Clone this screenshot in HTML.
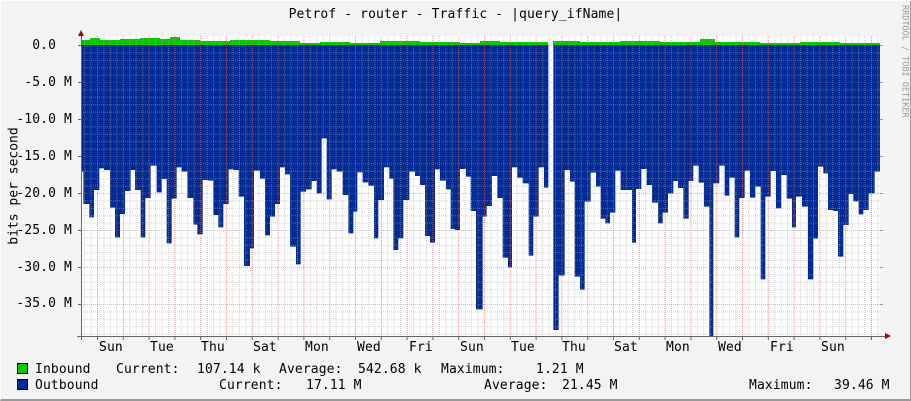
<!DOCTYPE html>
<html><head><meta charset="utf-8"><style>
html,body{margin:0;padding:0}
body{width:911px;height:400px;overflow:hidden;background:#f3f3f3;position:relative;font-family:"DejaVu Sans Mono","Liberation Mono",monospace;font-size:13px;color:#000}
.frame{position:absolute;left:0;top:0;width:909px;height:398px;border-right:2px solid #9a9a9a;border-bottom:2px solid #9a9a9a;border-top:1px solid #fff;border-left:1px solid #fff;box-sizing:content-box}
.t{position:absolute;white-space:pre;line-height:14px;letter-spacing:0.12px}
.sw{position:absolute;width:9px;height:9px;border:1px solid #000}
</style></head><body>
<div class="frame"></div>
<svg width="911" height="400" style="position:absolute;left:0;top:0">
<defs><clipPath id="c"><rect x="81" y="36" width="799" height="300"/></clipPath></defs>
<rect x="81" y="36" width="799" height="300" fill="#fff"/>
<g clip-path="url(#c)">
<path d="M81 45 V40 H90 V38 H100 V40 H120 V39 H140 V38 H160 V39 H170 V37 H180 V40 H200 V41 H230 V40 H270 V41 H300 V43 H320 V42 H350 V43 H380 V41 H420 V42 H460 V43 H480 V41 H500 V42 H548 V45 Z M553 45 V41 H580 V42 H620 V41 H660 V42 H700 V39 H715 V42 H760 V43 H800 V42 H840 V43 H880 V45 Z" fill="#00cc00"/>
<g transform="translate(80,130) scale(0.33333)" fill="#002a97">
<path d="M0 -255 V125 H10 V222 H28 V262 H42 V180 H58 V115 H72 V120 H90 V233 H105 V322 H120 V252 H135 V183 H152 V120 H165 V180 H182 V322 H196 V204 H212 V107 H230 V187 H245 V147 H260 V340 H275 V206 H290 V112 H305 V125 H322 V204 H340 V284 H352 V313 H368 V150 H385 V152 H400 V255 H415 V292 H430 V222 H446 V118 H460 V120 H476 V200 H492 V408 H510 V355 H522 V122 H540 V146 H555 V316 H570 V260 H585 V222 H600 V112 H615 V133 H630 V350 H648 V403 H662 V185 H678 V178 H695 V153 H710 V190 H725 V25 H740 V208 H755 V118 H770 V125 H788 V195 H805 V310 H820 V245 H832 V127 H848 V157 H865 V167 H882 V325 H895 V210 H912 V112 H928 V146 H940 V360 H955 V325 H970 V210 H988 V125 H1005 V138 H1020 V165 H1035 V318 H1050 V338 H1065 V118 H1080 V152 H1098 V178 H1112 V297 H1125 V300 H1140 V117 H1158 V140 H1172 V243 H1188 V538 H1208 V260 H1220 V228 H1236 V138 H1252 V204 H1268 V383 H1284 V412 H1296 V112 H1312 V143 H1328 V160 H1346 V377 H1360 V260 H1376 V112 H1392 V173 H1405 V-255 Z"/>
<path d="M1420 -255 V600 H1436 V437 H1454 V120 H1470 V155 H1484 V440 H1500 V479 H1514 V215 H1532 V128 H1548 V170 H1562 V266 H1576 V280 H1590 V248 H1606 V122 H1622 V180 H1640 V180 H1656 V338 H1668 V177 H1684 V117 H1700 V165 H1716 V218 H1734 V280 H1748 V248 H1764 V190 H1780 V153 H1794 V174 H1810 V266 H1826 V153 H1840 V107 H1856 V158 H1872 V230 H1888 V640 H1900 V160 H1918 V107 H1934 V197 H1948 V143 H1964 V322 H1978 V204 H1994 V122 H2010 V203 H2026 V170 H2042 V448 H2056 V200 H2072 V123 H2088 V235 H2104 V135 H2120 V206 H2136 V292 H2148 V200 H2166 V230 H2184 V448 H2200 V326 H2214 V110 H2230 V130 H2244 V240 H2260 V243 H2274 V380 H2290 V285 H2306 V192 H2320 V214 H2336 V253 H2350 V240 H2366 V190 H2384 V125 H2400 V-255 Z"/>
</g>
<g id="grid" stroke-width="1" stroke-dasharray="1,1" fill="none"></g>
</g>
<g id="ax" stroke="#666" fill="none"></g>
<path d="M885 333 L891 336 L885 339 Z" fill="#a00"/>
<path d="M78 36 L81 30 L84 36 Z" fill="#a00"/>
<text x="905" y="5" transform="rotate(90 905 5)" font-family="DejaVu Sans Mono, monospace" font-size="8.5" fill="#999" dominant-baseline="middle">RRDTOOL / TOBI OETIKER</text>
<text x="14" y="186" transform="rotate(-90 14 186)" text-anchor="middle" font-family="DejaVu Sans Mono, monospace" font-size="13" dominant-baseline="middle">bits per second</text>
</svg>
<script>
(function(){
var ns="http://www.w3.org/2000/svg",g=document.getElementById('grid'),ax=document.getElementById('ax');
function L(p,x1,y1,x2,y2,s){var l=document.createElementNS(ns,'line');l.setAttribute('x1',x1);l.setAttribute('y1',y1);l.setAttribute('x2',x2);l.setAttribute('y2',y2);l.setAttribute('stroke',s);p.appendChild(l);}
for(var i=0;i<54;i++){var y=45.5+i*7.4;if(y>336)break;if(i%5)L(g,81,y,880,y,'rgba(170,170,170,0.5)');}
for(var x=84.6;x<880;x+=6.45){L(g,x,36,x,336,'rgba(170,170,170,0.5)');}
for(var i=0;i<9;i++){var y=45.5+i*37;if(y>336)break;L(g,81,y,880,y,'rgba(230,60,60,0.4)');}
for(var x=97.5;x<880;x+=25.8){L(g,x,36,x,336,'rgba(230,60,60,0.4)');}
L(ax,77,336.5,886,336.5,'#666');L(ax,81.5,32,81.5,340,'#666');
for(var i=0;i<9;i++){var y=45.5+i*37;if(y>336)break;L(ax,78,y,81,y,'#666');L(ax,880,y,883,y,'#999');}
for(var x=97.5;x<880;x+=25.8){L(ax,x,336,x,340,'#666');}
})();
</script>
<div class="t" style="left:0;width:911px;text-align:center;top:8px">Petrof - router - Traffic - |query_ifName|</div>
<div class="t" style="right:839px;top:39px">0.0  </div>
<div class="t" style="right:839px;top:76px">-5.0 M</div>
<div class="t" style="right:839px;top:113px">-10.0 M</div>
<div class="t" style="right:839px;top:150px">-15.0 M</div>
<div class="t" style="right:839px;top:187px">-20.0 M</div>
<div class="t" style="right:839px;top:224px">-25.0 M</div>
<div class="t" style="right:839px;top:261px">-30.0 M</div>
<div class="t" style="right:839px;top:297px">-35.0 M</div>
<div class="t" style="left:99px;top:341px">Sun</div>
<div class="t" style="left:150px;top:341px">Tue</div>
<div class="t" style="left:201px;top:341px">Thu</div>
<div class="t" style="left:253px;top:341px">Sat</div>
<div class="t" style="left:305px;top:341px">Mon</div>
<div class="t" style="left:357px;top:341px">Wed</div>
<div class="t" style="left:409px;top:341px">Fri</div>
<div class="t" style="left:460px;top:341px">Sun</div>
<div class="t" style="left:511px;top:341px">Tue</div>
<div class="t" style="left:562px;top:341px">Thu</div>
<div class="t" style="left:614px;top:341px">Sat</div>
<div class="t" style="left:666px;top:341px">Mon</div>
<div class="t" style="left:718px;top:341px">Wed</div>
<div class="t" style="left:770px;top:341px">Fri</div>
<div class="t" style="left:821px;top:341px">Sun</div>
<div class="sw" style="left:17px;top:363px;background:#00cc00"></div>
<div class="sw" style="left:17px;top:379px;background:#002a97"></div>
<div class="t" style="left:35px;top:363px">Inbound</div>
<div class="t" style="left:116px;top:363px">Current:</div>
<div class="t" style="left:197px;top:363px">107.14 k</div>
<div class="t" style="left:279px;top:363px">Average:</div>
<div class="t" style="left:358px;top:363px">542.68 k</div>
<div class="t" style="left:441px;top:363px">Maximum:</div>
<div class="t" style="left:536px;top:363px">1.21 M</div>
<div class="t" style="left:35px;top:379px">Outbound</div>
<div class="t" style="left:219px;top:379px">Current:</div>
<div class="t" style="left:306px;top:379px">17.11 M</div>
<div class="t" style="left:484px;top:379px">Average:</div>
<div class="t" style="left:562px;top:379px">21.45 M</div>
<div class="t" style="left:749px;top:379px">Maximum:</div>
<div class="t" style="left:834px;top:379px">39.46 M</div>
</body></html>
